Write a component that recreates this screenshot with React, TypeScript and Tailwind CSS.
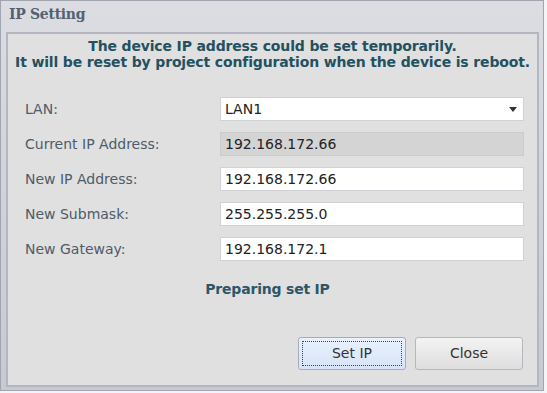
import { useState } from "react"

const rows = [
  { label: "Current IP Address:", value: "192.168.172.66", readOnly: true },
  { label: "New IP Address:", value: "192.168.172.66" },
  { label: "New Submask:", value: "255.255.255.0" },
  { label: "New Gateway:", value: "192.168.172.1" },
]

export default function App() {
  const [lan] = useState("LAN1")

  return (
    <div className="w-[547px] h-[393px] bg-[#f4f4f6]">
      {/* Window frame */}
      <div className="w-[544px] h-[391px] flex flex-col border border-[#a2a4b0] bg-gradient-to-b from-[#dcdde3] to-[#c8c9d1] pl-[5px] pr-[4px] pb-[3px]">
        <div className="h-[31px] flex items-center pl-[3px] pb-[5px] font-['DejaVu_Serif',serif] font-bold text-[14px] tracking-[-0.3px] text-[#55606f]">
          IP Setting
        </div>

        {/* Content panel */}
        <div className="flex-1 flex flex-col border-2 border-[#b4b6c1] bg-[#e0e0e0] font-['DejaVu_Sans',sans-serif]">
          <div className="pt-[4px] text-center font-bold text-[14px] leading-[16px] tracking-[-0.15px] text-[#24505f]">
            <p>The device IP address could be set temporarily.</p>
            <p>It will be reset by project configuration when the device is reboot.</p>
          </div>

          <div className="mt-[27px] flex flex-col gap-[11px] pl-[17px] pr-[13px]">
            <div className="flex items-center">
              <span className="w-[195px] text-[14px] text-[#4e5b68]">LAN:</span>
              <div className="flex-1 h-[24px] flex items-center justify-between bg-white border border-[#cfd1d6] pl-[4px] pr-[6px] text-[14px] text-[#222]">
                <span>{lan}</span>
                <svg width="8" height="5" viewBox="0 0 8 5">
                  <path d="M0 0 H8 L4 5 Z" fill="#333" />
                </svg>
              </div>
            </div>

            {rows.map((r) => (
              <div key={r.label} className="flex items-center">
                <span className="w-[195px] text-[14px] text-[#4e5b68]">{r.label}</span>
                <div
                  className={`flex-1 h-[24px] flex items-center pl-[4px] text-[14px] text-[#222] border ${
                    r.readOnly ? "bg-[#d4d4d4] border-[#cdcdcd]" : "bg-white border-[#cfd1d6]"
                  }`}
                >
                  {r.value}
                </div>
              </div>
            ))}
          </div>

          <p className="mt-[18px] pr-[10px] text-center font-bold text-[14px] tracking-[-0.2px] text-[#2d5668]">
            Preparing set IP
          </p>

          <div className="mt-auto mb-[15px] mr-[14px] flex justify-end gap-[9px]">
            <button className="w-[108px] h-[33px] rounded-[3px] border border-[#a6adba] bg-gradient-to-b from-[#eaf1fc] to-[#d6e3f8] p-[3px] text-[14px] text-[#333]">
              <span className="w-full h-full flex items-center justify-center border border-dotted border-[#444]">
                Set IP
              </span>
            </button>
            <button className="w-[108px] h-[33px] rounded-[3px] border border-[#b4b7be] bg-gradient-to-b from-[#f3f3f3] to-[#dedede] text-[14px] text-[#333]">
              Close
            </button>
          </div>
        </div>
      </div>
    </div>
  )
}
